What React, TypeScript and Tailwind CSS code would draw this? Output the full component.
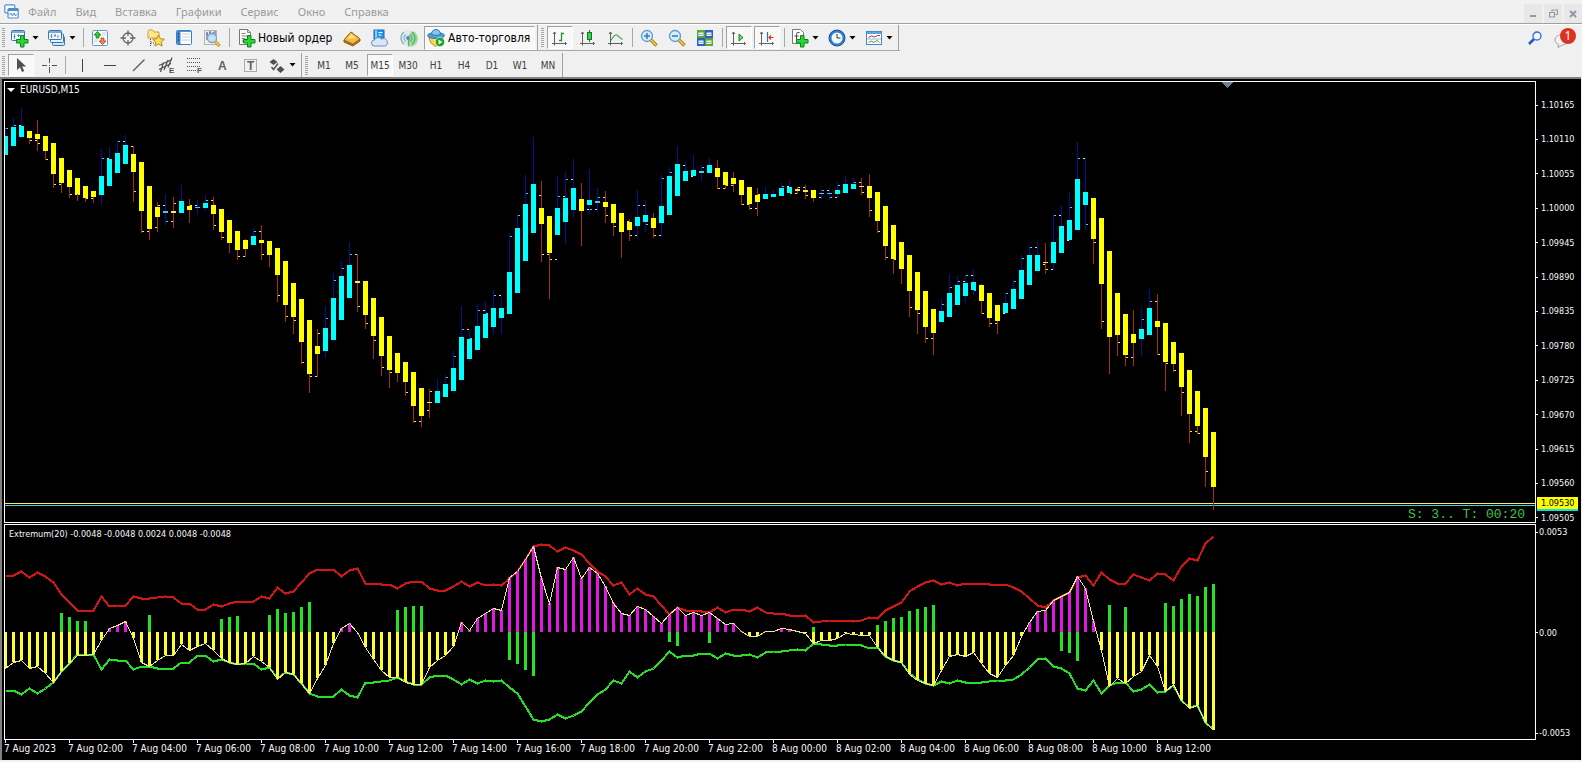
import type { ReactNode } from "react";

/* Bar slots are 8px apart; y values are pixels from the top of the terminal window. */
const STEP = 8;
const FIRST_X = 5;
const ZERO_Y = 632;
const barX = (i: number) => FIRST_X + i * STEP;

/* [direction, high, body top, body bottom, low] */
type Candle = [0 | 1, number, number, number, number];
const CANDLES: Candle[] = [
  [1, 128, 136, 155, 155], [1, 118, 127, 146, 146], [1, 108, 126, 137, 138], [0, 131, 131, 138, 144],
  [0, 120, 134, 139, 151], [0, 136, 136, 151, 160], [0, 143, 143, 174, 188], [0, 158, 158, 183, 193],
  [0, 170, 170, 187, 198], [0, 178, 178, 194, 201], [0, 186, 186, 198, 202], [0, 191, 191, 197, 203],
  [1, 149, 176, 195, 205], [1, 147, 159, 186, 186], [1, 140, 153, 173, 173], [1, 135, 145, 164, 164],
  [0, 146, 154, 172, 202], [0, 162, 162, 211, 233], [0, 186, 186, 229, 240], [0, 202, 207, 217, 232],
  [1, 194, 211, 213, 225], [0, 197, 211, 213, 228], [1, 185, 201, 213, 213], [0, 199, 206, 210, 223],
  [1, 200, 207, 208, 215], [1, 195, 203, 208, 211], [0, 197, 205, 214, 230], [0, 209, 209, 232, 240],
  [0, 220, 220, 243, 253], [0, 231, 231, 250, 260], [0, 239, 240, 249, 257], [1, 228, 236, 245, 245],
  [0, 225, 240, 243, 260], [0, 241, 241, 255, 267], [0, 248, 248, 275, 302], [0, 261, 261, 305, 322],
  [0, 283, 283, 317, 334], [0, 299, 299, 342, 364], [0, 320, 320, 374, 393], [0, 329, 346, 354, 377],
  [1, 306, 328, 351, 358], [1, 273, 298, 340, 340], [1, 261, 276, 320, 320], [1, 242, 265, 298, 298],
  [0, 254, 281, 283, 312], [0, 281, 281, 315, 329], [0, 298, 298, 336, 359], [0, 317, 317, 356, 376],
  [0, 336, 336, 370, 388], [0, 353, 353, 373, 382], [0, 362, 362, 382, 396], [0, 372, 372, 406, 423],
  [0, 388, 388, 416, 427], [0, 389, 402, 403, 418], [1, 379, 391, 403, 403], [1, 375, 384, 397, 397],
  [1, 351, 368, 391, 391], [1, 306, 337, 380, 380], [1, 330, 339, 359, 361], [1, 304, 326, 350, 350],
  [1, 301, 314, 338, 338], [1, 290, 308, 327, 334], [1, 297, 308, 318, 334], [1, 233, 272, 314, 314],
  [1, 214, 228, 293, 293], [1, 175, 204, 261, 261], [1, 137, 184, 233, 233], [0, 181, 208, 224, 262],
  [0, 216, 216, 253, 299], [1, 176, 208, 235, 235], [1, 172, 198, 222, 244], [1, 159, 188, 210, 218],
  [0, 183, 199, 211, 246], [1, 169, 200, 205, 214], [1, 188, 201, 203, 212], [0, 191, 202, 207, 223],
  [0, 204, 204, 223, 236], [0, 213, 213, 232, 258], [0, 219, 222, 230, 241], [1, 190, 217, 226, 238],
  [1, 200, 215, 222, 232], [0, 213, 218, 228, 238], [1, 175, 206, 223, 236], [1, 167, 176, 215, 215],
  [1, 146, 164, 196, 196], [1, 162, 171, 181, 181], [1, 155, 170, 176, 176], [1, 165, 171, 173, 181],
  [1, 158, 165, 173, 173], [0, 160, 168, 177, 189], [0, 172, 172, 185, 189], [0, 172, 178, 184, 192],
  [0, 180, 180, 195, 205], [0, 187, 187, 204, 210], [0, 188, 195, 202, 216], [1, 187, 194, 199, 199],
  [1, 190, 194, 197, 197], [1, 183, 188, 196, 196], [1, 180, 187, 193, 193], [0, 187, 189, 191, 194],
  [0, 185, 190, 192, 199], [0, 190, 190, 198, 202], [1, 189, 193, 194, 199], [1, 188, 193, 194, 200],
  [1, 182, 190, 194, 198], [1, 176, 184, 193, 193], [1, 178, 184, 189, 189], [0, 178, 186, 187, 195],
  [0, 174, 186, 198, 217], [0, 192, 192, 221, 233], [0, 206, 206, 246, 260], [0, 225, 225, 259, 274],
  [0, 242, 242, 269, 284], [0, 255, 255, 291, 317], [0, 272, 272, 310, 334], [0, 291, 291, 327, 343],
  [0, 309, 309, 333, 355], [1, 299, 311, 322, 322], [1, 274, 293, 317, 317], [1, 276, 285, 305, 305],
  [1, 275, 283, 296, 303], [1, 269, 282, 290, 295], [0, 284, 285, 301, 314], [0, 293, 293, 318, 327],
  [0, 305, 305, 321, 334], [1, 293, 303, 313, 314], [1, 280, 289, 309, 309], [1, 255, 270, 299, 299],
  [1, 246, 255, 285, 285], [1, 241, 255, 271, 271], [0, 243, 262, 263, 274], [1, 215, 242, 263, 270],
  [1, 205, 226, 253, 253], [1, 192, 220, 240, 242], [1, 142, 179, 230, 230], [1, 158, 192, 205, 230],
  [0, 198, 198, 239, 264], [0, 218, 218, 284, 329], [0, 251, 251, 337, 374], [0, 293, 293, 335, 356],
  [0, 314, 314, 355, 366], [0, 310, 334, 343, 366], [1, 308, 329, 339, 356], [1, 289, 308, 335, 335],
  [0, 294, 321, 327, 355], [0, 323, 323, 362, 391], [0, 342, 342, 364, 372], [0, 353, 353, 387, 416],
  [0, 370, 370, 414, 443], [0, 391, 391, 426, 434], [0, 408, 408, 457, 487], [0, 432, 432, 487, 510],
];

/* Close of each bar; 0 where the body hides it. */
const CLOSES = [
  128, 125, 0, 140, 143, 159, 184, 0, 194, 194, 198, 0, 158, 0, 141, 146, 191, 231, 227, 205, 221, 203, 0, 205, 0,
  200, 225, 237, 0, 256, 0, 231, 254, 0, 295, 316, 320, 362, 376, 333, 318, 280, 268, 254, 306, 323, 340, 367, 372,
  0, 392, 421, 410, 391, 0, 377, 356, 329, 338, 310, 313, 295, 0, 236, 215, 193, 195, 254, 259, 196, 179, 0, 209,
  209, 197, 215, 226, 221, 235, 205, 224, 235, 178, 172, 165, 176, 0, 167, 0, 188, 185, 0, 204, 208, 194, 0, 0, 186,
  193, 187, 195, 197, 190, 197, 185, 0, 182, 192, 210, 231, 257, 259, 0, 307, 313, 338, 0, 304, 287, 281, 275, 290,
  313, 323, 313, 293, 281, 258, 247, 264, 269, 215, 240, 207, 158, 224, 242, 321, 0, 342, 357, 0, 319, 301, 354,
  363, 370, 392, 431, 433, 471, 0,
];

const SIGNAL = [
  668, 662, 660, 668, 666, 673, 682, 671, 663, 655, 655, 654, 640, 628, 625, 621, 638, 662, 666, 660, 655, 655, 644,
  650, 646, 643, 650, 658, 662, 664, 663, 656, 661, 667, 679, 672, 674, 683, 693, 678, 665, 643, 628, 623, 632, 647,
  659, 670, 677, 677, 682, 684, 684, 667, 660, 655, 646, 622, 630, 618, 613, 608, 610, 577, 571, 559, 546, 578, 603,
  567, 569, 557, 578, 567, 573, 586, 603, 613, 615, 606, 609, 616, 623, 614, 607, 615, 612, 615, 612, 618, 624, 623,
  631, 636, 636, 631, 631, 628, 629, 631, 633, 643, 640, 640, 638, 633, 634, 635, 635, 647, 656, 660, 662, 674, 680,
  683, 685, 670, 656, 654, 656, 652, 663, 673, 677, 665, 655, 636, 622, 611, 610, 600, 596, 592, 576, 588, 621, 650,
  686, 678, 683, 676, 671, 655, 666, 691, 684, 700, 708, 705, 722, 730,
];

const UPPER = [
  575, 575, 571, 577, 572, 576, 582, 594, 602, 610, 610, 610, 596, 606, 605, 605, 596, 598, 598, 597, 596, 597, 603,
  603, 609, 609, 604, 606, 603, 601, 601, 601, 596, 598, 587, 593, 591, 582, 573, 569, 569, 569, 576, 570, 568, 583,
  583, 584, 584, 588, 583, 581, 581, 588, 590, 590, 586, 581, 586, 582, 585, 584, 585, 578, 571, 559, 546, 544, 545,
  551, 547, 550, 554, 563, 571, 576, 585, 582, 594, 588, 594, 596, 605, 614, 607, 610, 610, 611, 612, 607, 612, 609,
  609, 611, 607, 612, 613, 613, 615, 616, 615, 622, 621, 620, 620, 620, 621, 620, 617, 618, 610, 606, 602, 591, 586,
  582, 580, 584, 582, 585, 583, 583, 583, 584, 584, 584, 587, 591, 598, 605, 607, 600, 596, 592, 577, 575, 585, 572,
  579, 583, 583, 574, 577, 580, 573, 574, 580, 566, 558, 560, 543, 536,
];

const LOWER = [
  690, 690, 694, 688, 693, 688, 682, 671, 663, 654, 654, 654, 669, 659, 660, 660, 669, 666, 666, 668, 668, 668, 662,
  662, 655, 655, 661, 659, 662, 664, 663, 663, 669, 667, 678, 672, 674, 683, 693, 696, 696, 696, 689, 695, 697, 682,
  682, 681, 680, 677, 681, 684, 684, 677, 675, 675, 679, 684, 679, 683, 680, 681, 680, 687, 693, 706, 719, 721, 719,
  714, 718, 715, 711, 702, 694, 689, 680, 683, 671, 677, 671, 668, 660, 651, 657, 655, 655, 653, 653, 658, 653, 655,
  655, 654, 657, 652, 651, 651, 650, 649, 650, 643, 644, 645, 645, 644, 644, 645, 648, 647, 656, 660, 662, 673, 679,
  683, 685, 681, 683, 680, 682, 682, 682, 681, 680, 680, 679, 674, 667, 659, 658, 666, 668, 673, 688, 690, 680, 693,
  685, 682, 682, 691, 689, 684, 692, 691, 685, 700, 707, 705, 722, 729,
];

const COUNTER: [number, number][] = [
  [7, 613], [8, 617], [9, 621], [10, 621], [18, 615], [27, 619], [28, 617], [29, 616], [33, 615], [34, 609],
  [35, 613], [36, 612], [37, 607], [38, 602], [49, 610], [50, 607], [51, 606], [52, 606], [63, 660], [64, 664],
  [65, 670], [66, 676], [83, 642], [84, 646], [88, 643], [101, 627], [109, 625], [110, 621], [111, 618], [112, 617],
  [113, 611], [114, 609], [115, 607], [116, 605], [132, 651], [133, 653], [134, 661], [138, 605], [140, 607],
  [145, 603], [146, 606], [147, 599], [148, 594], [149, 596], [150, 587], [151, 584],
];

const PRICES = [
  "1.10165", "1.10110", "1.10055", "1.10000", "1.09945", "1.09890", "1.09835", "1.09780", "1.09725", "1.09670",
  "1.09615", "1.09560", "1.09505",
];
const TIMES = [
  "7 Aug 2023", "7 Aug 02:00", "7 Aug 04:00", "7 Aug 06:00", "7 Aug 08:00", "7 Aug 10:00", "7 Aug 12:00",
  "7 Aug 14:00", "7 Aug 16:00", "7 Aug 18:00", "7 Aug 20:00", "7 Aug 22:00", "8 Aug 00:00", "8 Aug 02:00",
  "8 Aug 04:00", "8 Aug 06:00", "8 Aug 08:00", "8 Aug 10:00", "8 Aug 12:00",
];
const MENU = ["Файл", "Вид", "Вставка", "Графики", "Сервис", "Окно", "Справка"];
const FRAMES = ["M1", "M5", "M15", "M30", "H1", "H4", "D1", "W1", "MN"];

const points = (ys: number[]) => ys.map((y, i) => `${barX(i) + 0.5},${y + 0.5}`).join(" ");

function PricePlot() {
  return (
    <svg className="block h-[440px] w-full" shapeRendering="crispEdges" role="img" aria-label="EURUSD M15">
      <g transform="translate(-5 -82)">
        {CANDLES.map(([up, hi, top, bottom, lo], i) => {
          const x = barX(i);
          const prev = i > 0 ? CLOSES[i - 1] : 0;
          return (
            <g key={i}>
              <rect x={x} y={hi} width={1} height={lo - hi} fill={up ? "#0c0c96" : "#a52a1e"} />
              {prev > 0 && <rect x={x - 2} y={prev} width={2} height={1} fill={up ? "#c8f0d0" : "#f0e08c"} />}
              {CLOSES[i] > 0 && (
                <rect x={x + 1} y={CLOSES[i]} width={2} height={1} fill={up ? "#50d8d8" : "#ffe650"} />
              )}
              <rect
                x={x - 2}
                y={top}
                width={5}
                height={bottom - top}
                fill={up ? (bottom - top < 3 ? "#46c8fa" : "#00ffff") : bottom - top < 3 ? "#ffe650" : "#ffff00"}
              />
            </g>
          );
        })}
        <rect x={5} y={503} width="100%" height={1} fill="#f0f05a" />
        <rect x={5} y={505} width="100%" height={1} fill="#48d1cc" />
        <rect x={1213} y={487} width={1} height={23} fill="#a52a1e" />
        <path d="M1222 82h11l-5.500 6z" fill="#708090" />
      </g>
    </svg>
  );
}

function ExtremumPlot() {
  return (
    <svg className="block h-[214px] w-full" shapeRendering="crispEdges" role="img" aria-label="Extremum">
      <g transform="translate(-5 -525)">
        <polyline points={points(LOWER)} fill="none" stroke="#26e026" strokeWidth={2} />
        <polyline points={points(UPPER)} fill="none" stroke="#d41616" strokeWidth={2} />
        {COUNTER.map(([i, y]) => (
          <rect
            key={i}
            x={barX(i) - 1}
            y={Math.min(y, ZERO_Y)}
            width={3}
            height={Math.abs(y - ZERO_Y)}
            fill="#22e422"
          />
        ))}
        {SIGNAL.map((y, i) => (
          <rect
            key={i}
            x={barX(i) - 1}
            y={Math.min(y, ZERO_Y)}
            width={3}
            height={Math.abs(y - ZERO_Y)}
            fill={y < ZERO_Y ? "#e018e0" : "#ffff28"}
          />
        ))}
        <polyline points={points(SIGNAL)} fill="none" stroke="#f0e68c" strokeWidth={1} />
      </g>
    </svg>
  );
}

/* ---------- icons ---------- */

function Icon({ children, size = 18 }: { children: ReactNode; size?: number }) {
  return (
    <svg width={size} height={size} viewBox="0 0 18 18" fill="none" className="shrink-0 overflow-visible" aria-hidden="true">
      {children}
    </svg>
  );
}

const Plus = () => (
  <path d="M9.500 6.500h3.500v4h4v3.500h-4v4h-3.500v-4h-4v-3.500h4z" fill="#2ad63c" stroke="#0a8418" strokeWidth="1" />
);

const NewChart = () => (
  <Icon>
    <rect x=".5" y="1.500" width="13" height="10" rx="1" fill="#f2f8fe" stroke="#3c74aa" />
    <path d="M1 3h12" stroke="#78abd8" strokeWidth="2" />
    <path d="M3.500 5v5M7.500 5v3M2.500 7.500h2M6 6.500h3M10 7h2" stroke="#5f8fb8" />
    <Plus />
  </Icon>
);
const Profiles = () => (
  <Icon>
    <rect x="4.500" y="7.500" width="12" height="9" rx="1" fill="#d3e6f7" stroke="#3c74aa" />
    <rect x="2.500" y="5" width="13" height="8.500" rx="1" fill="#e3f0fb" stroke="#3c74aa" />
    <rect x=".5" y="1.500" width="13" height="9" rx="1" fill="#f2f8fe" stroke="#3c74aa" />
    <path d="M1 3h12" stroke="#78abd8" strokeWidth="2" />
    <path d="M3.500 5v4M7 5v3M10 6v3M2.500 7h2M6 6.500h2" stroke="#5f8fb8" />
  </Icon>
);
const MarketWatch = () => (
  <Icon>
    <rect x="1.500" y="1.500" width="15" height="15" rx="1" fill="#fff" stroke="#5a9bd2" />
    <path d="M3 11h4M3 13h4M11 4h4M11 6h4" stroke="#c4d2dc" />
    <path d="M6.500 2.500l3.500 3.500h-2v3h-3v-3h-2z" fill="#3cc83c" stroke="#0f7a18" strokeWidth=".8" />
    <path d="M11.500 15.500l-3.500-3.500h2v-3h3v3h2z" fill="#f88050" stroke="#c03c14" strokeWidth=".8" />
  </Icon>
);
const Target = () => (
  <Icon>
    <circle cx="9" cy="9" r="5" stroke="#666" strokeWidth="1.300" />
    <path d="M9 1.500v5.500M9 11v5.500M1.500 9h5.500M11 9h5.500" stroke="#666" strokeWidth="1.300" />
  </Icon>
);
const starPath = "M11.500 6l1.800 3.700 4 .5-3 2.800.8 4-3.600-2-3.600 2 .8-4-3-2.800 4-.5z";
const Navigator = () => (
  <Icon>
    <path d="M1 2.500q0-1.500 1.500-1.500h3l1.500 2h5v6h-11z" fill="#ffe690" stroke="#c8a43c" />
    <path d="M3.500 10v7M4 14h3" stroke="#444" strokeDasharray="1 1" />
    <path d={starPath} fill="#ffdc50" stroke="#b08818" />
  </Icon>
);
const DataWindow = () => (
  <Icon>
    <rect x="1.500" y="1.500" width="15" height="14" rx="1" fill="#fff" stroke="#3c7cc0" />
    <path d="M2 2.500h14" stroke="#4a9be0" />
    <rect x="2" y="2" width="3.500" height="13" fill="#3f8ad4" />
    <path d="M3 5h1M3 8h1M3 11h1" stroke="#111" />
    <path d="M7 5h8M7 8h8M7 11h8" stroke="#c4ccd8" />
  </Icon>
);
const Tester = () => (
  <Icon>
    <rect x="1.500" y="1.500" width="12" height="14" fill="#f4efe2" stroke="#b4b4b4" />
    <path d="M4 3v8M7 2v5M10 3v5M12 2v4M3 5h2M6 4h2M9 5h2" stroke="#4d6c96" strokeWidth="1.200" />
    <circle cx="9" cy="9" r="4.500" fill="#bfe0f7" fillOpacity=".85" stroke="#78a4cc" strokeWidth="1.300" />
    <path d="M12.500 12.500l4 4.500" stroke="#b8860b" strokeWidth="3" />
    <path d="M12.500 12.500l3.500 4" stroke="#ffd75a" strokeWidth="1.300" />
  </Icon>
);
const NewOrder = () => (
  <Icon>
    <path d="M1.500.5h8l3 3v12h-11z" fill="#fff" stroke="#777" />
    <path d="M9.500.5v3h3M3.500 4.500h4M3.500 7h6M3.500 9.500h4M3.500 12h2" stroke="#888" />
    <Plus />
  </Icon>
);
const Editor = () => (
  <Icon>
    <path d="M1 11l7-8 9 7v2l-7 5-9-4z" fill="#b87414" stroke="#8c5a0c" />
    <path d="M1 11l7-8 9 7-7 5z" fill="#f0bc48" stroke="#a86c10" />
    <path d="M4 10l4-5 5 4z" fill="#ffe28c" />
  </Icon>
);
const Market = () => (
  <Icon>
    <rect x="3" y="1" width="10" height="9" fill="#1e96f0" stroke="#0f6cc0" />
    <path d="M5 1v9M7.500 3.500h4M7.500 6h3" stroke="#fff" />
    <path d="M3.500 17a3 3 0 0 1 0-6 4 3.500 0 0 1 7-1 3.500 3.500 0 0 1 4 7z" fill="#dce7f5" stroke="#6f8fbf" />
  </Icon>
);
const Signals = () => (
  <Icon>
    <circle cx="9" cy="9" r="8" fill="#e2e9ee" />
    <path d="M9 17.500a8 8 0 0 0 4-15.500l-4 5z" fill="#a4d8a4" />
    <path d="M5 15a7.500 7.500 0 0 1 0-12M7 12.500a4 4 0 0 1 0-7" stroke="#8ab0cc" strokeWidth="1.300" />
    <path d="M13 15a7.500 7.500 0 0 0 0-12M11 12.500a4 4 0 0 0 0-7M9.500 9v8" stroke="#58b068" strokeWidth="1.300" />
    <circle cx="9" cy="9" r="2" fill="#4a90b8" />
  </Icon>
);
const AutoTrade = () => (
  <Icon>
    <path d="M2 8q7 3 14 0l-1.500 6-6 3.500-5-4z" fill="#ffd84a" stroke="#b48c14" />
    <ellipse cx="9" cy="6.500" rx="8.500" ry="3" fill="#4b9fdc" stroke="#2a78b4" />
    <path d="M4.500 5.500q.5-5 4.500-5t4.500 5q-4.500 2-9 0z" fill="#86c6f0" stroke="#2a78b4" />
    <circle cx="13" cy="13" r="4.700" fill="#18a428" stroke="#fff" strokeWidth=".6" />
    <path d="M11.500 10.500v5l4-2.500z" fill="#fff" />
  </Icon>
);
const Axes = () => (
  <path d="M3.500 3v13.500M1 14.500h14.500M2 5l1.500-2 1.500 2M14 13l1.500 1.500-1.500 1.500" stroke="#606060" />
);
const BarChart = () => (
  <Icon>
    <Axes />
    <path d="M10.500 3.500v9M10.500 4.500h2.500M8 11.500h2.500" stroke="#1e9632" strokeWidth="1.300" />
  </Icon>
);
const CandleChart = () => (
  <Icon>
    <Axes />
    <path d="M10.500 1v12" stroke="#0f7a1e" />
    <rect x="8.500" y="3.500" width="4" height="7" fill="#32d24a" stroke="#0f7a1e" />
  </Icon>
);
const LineChart = () => (
  <Icon>
    <Axes />
    <path d="M4 11.500q4-7.500 6.500-5t5 4" stroke="#58a860" strokeWidth="1.200" />
  </Icon>
);
const Magnifier = ({ plus }: { plus?: boolean }) => (
  <Icon>
    <path d="M11 11l5.500 5.500" stroke="#a87c10" strokeWidth="3.400" />
    <path d="M11 11l5 5" stroke="#f8d048" strokeWidth="1.600" />
    <circle cx="7" cy="7" r="5.500" fill="#d4edfc" stroke="#5a9ad4" strokeWidth="1.300" />
    <path d={plus ? "M4 7h6M7 4v6" : "M4 7h6"} stroke="#3c7cc0" strokeWidth="1.600" />
  </Icon>
);
const Tile = () => (
  <Icon>
    <rect x="1" y="1" width="8" height="8" fill="#5aa82c" />
    <rect x="9" y="1" width="8" height="8" fill="#2b62c4" />
    <rect x="1" y="9" width="8" height="8" fill="#2b62c4" />
    <rect x="9" y="9" width="8" height="8" fill="#5aa82c" />
    <path d="M2.500 3.500h5v3.500h-5zM10.500 3.500h5v3.500h-5zM2.500 11.500h5v3.500h-5zM10.500 11.500h5v3.500h-5z" fill="#eef6fb" />
    <path d="M3 5.500h4M11 5.500h4M3 13.500h4M11 13.500h4" stroke="#9ab8cc" />
  </Icon>
);
const AutoScroll = () => (
  <Icon>
    <Axes />
    <path d="M9 5v7l4-3.500z" fill="#6cd878" stroke="#148a24" />
  </Icon>
);
const ChartShift = () => (
  <Icon>
    <Axes />
    <path d="M9.500 3v10" stroke="#3470b0" strokeWidth="1.200" />
    <path d="M11 8.500h4.500M13 6.500l-2 2 2 2" stroke="#c84014" strokeWidth="1.200" />
  </Icon>
);
const Indicators = () => (
  <Icon>
    <path d="M1.500.5h8l3 3v11h-11z" fill="#fff" stroke="#777" />
    <path d="M8.500 3.500q-3-1-3 2v6M3.500 7h4" stroke="#444" />
    <Plus />
  </Icon>
);
const Clock = () => (
  <Icon>
    <circle cx="9" cy="9" r="8" fill="#2f7fd4" stroke="#1a4f94" />
    <circle cx="9" cy="9" r="5.500" fill="#f2f8fd" />
    <path d="M9 5v4h3.500" stroke="#333" />
  </Icon>
);
const Template = () => (
  <Icon>
    <rect x="1.500" y="2.500" width="15" height="13" fill="#fff" stroke="#4a86c0" />
    <path d="M2 4h14" stroke="#5aa4e4" strokeWidth="2" />
    <path d="M3.500 8.500l3-1.500 3 1 3-1.500h2.500" stroke="#904038" />
    <path d="M2 10h14" stroke="#9ab4cc" />
    <path d="M3.500 13.500l2.500-1.500 3 1.500 3-2 2.500 2" stroke="#4aa060" />
  </Icon>
);

const Cursor = () => (
  <Icon>
    <path d="M5 2v12l3-2.800 2 4.800 2.200-1-2-4.500h4z" fill="#505050" />
  </Icon>
);
const Cross = () => (
  <Icon>
    <path d="M9.500 2v5M9.500 11v6M2 9.500h5M12 9.500h5M9 9.500h1" stroke="#555" />
  </Icon>
);
const VLine = () => (
  <Icon>
    <path d="M9.500 3v13" stroke="#444" />
  </Icon>
);
const HLine = () => (
  <Icon>
    <path d="M3 9.500h12" stroke="#444" />
  </Icon>
);
const Trend = () => (
  <Icon>
    <path d="M4 15l11.500-11.500" stroke="#505050" strokeWidth="1.100" />
  </Icon>
);
const Channel = () => (
  <Icon>
    <path d="M2 9.500l13-6M2 13.500l12-6M3.500 16l3-9.500M7 14l4-10M11 11.500l4-10" stroke="#505050" strokeWidth="1.200" />
    <text x="12" y="17" fontSize="8" fontWeight="700" fill="#505050" fontFamily="Liberation Sans, sans-serif">E</text>
  </Icon>
);
const Fibo = () => (
  <Icon>
    <path d="M2 2.500h14M2 6.500h14M2 10.500h14M2 14.500h9" stroke="#505050" strokeDasharray="1 1" />
    <text x="12" y="17" fontSize="8" fontWeight="700" fill="#505050" fontFamily="Liberation Sans, sans-serif">F</text>
  </Icon>
);
const TextTool = () => (
  <Icon>
    <text x="5" y="14" fontSize="12" fontWeight="700" fill="#606060" fontFamily="Liberation Sans, sans-serif">A</text>
  </Icon>
);
const LabelTool = () => (
  <Icon>
    <rect x="3.500" y="3.500" width="12" height="12" stroke="#666" strokeDasharray="1 1" />
    <text x="6" y="14" fontSize="12" fontWeight="700" fill="#606060" fontFamily="Liberation Sans, sans-serif">T</text>
  </Icon>
);
const Arrows = () => (
  <Icon>
    <path d="M5.500 3l4 3-4 3-4-3zM12.500 10l4 3.500-4 3.500-4-3.500z" fill="#505050" />
    <path d="M3.500 11l2 2.500 4.500-6" stroke="#505050" strokeWidth="1.400" />
  </Icon>
);

/* ---------- toolbar parts ---------- */

const Grip = () => (
  <span className="flex w-[7px] shrink-0 flex-col items-center justify-center gap-px" aria-hidden="true">
    {Array.from({ length: 10 }, (_, i) => (
      <span key={i} className="h-px w-[3px] bg-[#a6a6a6]" />
    ))}
  </span>
);
const Sep = () => (
  <span className="flex w-[6px] shrink-0 justify-center py-[3px]" aria-hidden="true">
    <span className="w-px bg-[#a8a8a8]" />
  </span>
);
const ThinSep = () => (
  <span className="flex w-[5px] shrink-0 justify-center py-[3px]" aria-hidden="true">
    <span className="w-px bg-[#a8a8a8]" />
  </span>
);
const End = () => <span className="mr-px w-px shrink-0 bg-[#a0a0a0]" aria-hidden="true" />;

function Tool({ label, on, children }: { label: string; on?: boolean; children: ReactNode }) {
  return (
    <button type="button" aria-label={label} aria-pressed={on} className="flex w-7 shrink-0 items-stretch p-px">
      <span
        className={
          on
            ? "flex flex-1 items-center justify-center border border-t-[#a0a0a0] border-r-white border-b-white border-l-[#a0a0a0] bg-[#f8f8f8]"
            : "flex flex-1 items-center justify-center"
        }
      >
        {children}
      </span>
    </button>
  );
}
function Drop({ label, children }: { label: string; children: ReactNode }) {
  return (
    <button type="button" aria-label={label} className="flex w-[37px] shrink-0 items-center gap-[3px] pl-1">
      {children}
      <svg width="7" height="4" viewBox="0 0 7 4" className="shrink-0" aria-hidden="true">
        <path d="M.5 0h6l-3 3.500z" fill="#000" />
      </svg>
    </button>
  );
}

export default function App() {
  return (
    <div className="flex min-h-screen flex-col bg-[#f0f0f0] font-['Noto_Sans','Open_Sans',sans-serif]">
      <header>
        <div className="flex h-6 items-stretch border-b border-[#a0a0a0] bg-[#f1f1f1]">
          <span className="flex w-[19px] items-center justify-end">
            <svg width="15" height="15" viewBox="0 0 15 15" fill="none" aria-hidden="true">
              <rect x=".8" y=".8" width="10" height="8" rx="1" fill="#fff" stroke="#4a90d0" strokeWidth="1.200" />
              <rect x="4" y="4.500" width="10.200" height="9.500" rx="1" fill="#fff" stroke="#4a90d0" strokeWidth="1.200" />
              <path d="M4 6h10" stroke="#4a90d0" strokeWidth="2" />
              <path d="M5.500 11l1.500-2 1.500 3 1.500-3 1.500 3 1-2" stroke="#4a90d0" />
            </svg>
          </span>
          <nav className="flex flex-1 items-center gap-[19px] pt-0.5 pl-[9px] text-[11px] text-[#9a9a9a]">
            {MENU.map((m) => (
              <a key={m} href="#">
                {m}
              </a>
            ))}
          </nav>
          <div className="flex items-stretch gap-0.5 pt-1">
            <button type="button" aria-label="Свернуть" className="flex w-[18px] items-center justify-center bg-[#e8e8e8]">
              <span className="mt-[5px] h-0.5 w-1.5 bg-[#8c9aa6]" />
            </button>
            <button type="button" aria-label="Восстановить" className="flex w-[18px] items-center justify-center bg-[#e8e8e8]">
              <svg width="9" height="9" viewBox="0 0 9 9" fill="none" aria-hidden="true">
                <path d="M3 2.500v-1.500h5.500v4.500h-2M.5 3.500h5v4.500h-5z" stroke="#8c9aa6" strokeWidth="1.200" />
              </svg>
            </button>
            <button type="button" aria-label="Закрыть" className="flex w-[18px] items-center justify-center bg-[#e8e8e8]">
              <svg width="8" height="8" viewBox="0 0 8 8" aria-hidden="true">
                <path d="M1 1l6 6M7 1l-6 6" stroke="#8c9aa6" strokeWidth="2" />
              </svg>
            </button>
          </div>
        </div>

        <div className="flex items-start justify-between border-t border-white">
          <div>
            <div className="flex h-[26px] items-stretch border-b border-[#a8a8a8]">
              <Grip />
              <Drop label="Новый график"><NewChart /></Drop>
              <Drop label="Профили"><Profiles /></Drop>
              <ThinSep />
              <Tool label="Обзор рынка"><MarketWatch /></Tool>
              <Tool label="Окно данных"><Target /></Tool>
              <Tool label="Навигатор"><Navigator /></Tool>
              <Tool label="Терминал"><DataWindow /></Tool>
              <Tool label="Тестер стратегий"><Tester /></Tool>
              <Sep />
              <button type="button" className="flex w-[106px] shrink-0 items-center gap-0.5 pl-1.5 font-['DejaVu_Sans_Condensed','DejaVu_Sans',sans-serif] text-xs whitespace-nowrap text-black">
                <NewOrder />
                Новый ордер
              </button>
              <Tool label="Редактор"><Editor /></Tool>
              <Tool label="Маркет"><Market /></Tool>
              <Tool label="Сигналы"><Signals /></Tool>
              <button type="button" aria-pressed="true" className="mx-0.5 mt-px flex w-[111px] shrink-0 items-center gap-[3px] border border-t-[#a0a0a0] border-r-white border-b-white border-l-[#a0a0a0] bg-[#f8f8f8] pl-0.5 font-['DejaVu_Sans_Condensed','DejaVu_Sans',sans-serif] text-xs whitespace-nowrap text-black">
                <AutoTrade />
                Авто-торговля
              </button>
              <End />
              <Grip />
              <Tool label="Бары" on><BarChart /></Tool>
              <Tool label="Свечи"><CandleChart /></Tool>
              <Tool label="Линия"><LineChart /></Tool>
              <ThinSep />
              <Tool label="Увеличить"><Magnifier plus /></Tool>
              <Tool label="Уменьшить"><Magnifier /></Tool>
              <Tool label="Упорядочить окна"><Tile /></Tool>
              <Sep />
              <Tool label="Автопрокрутка" on><AutoScroll /></Tool>
              <Tool label="Сдвиг графика" on><ChartShift /></Tool>
              <Sep />
              <Drop label="Индикаторы"><Indicators /></Drop>
              <Drop label="Периоды"><Clock /></Drop>
              <Drop label="Шаблоны"><Template /></Drop>
              <End />
            </div>
            <div className="flex h-[26px] items-stretch pt-0.5">
              <Grip />
              <Tool label="Курсор" on><Cursor /></Tool>
              <Tool label="Перекрестие"><Cross /></Tool>
              <ThinSep />
              <Tool label="Вертикальная линия"><VLine /></Tool>
              <Tool label="Горизонтальная линия"><HLine /></Tool>
              <Tool label="Трендовая линия"><Trend /></Tool>
              <Tool label="Канал"><Channel /></Tool>
              <Tool label="Фибоначчи"><Fibo /></Tool>
              <Tool label="Текст"><TextTool /></Tool>
              <Tool label="Метка"><LabelTool /></Tool>
              <Drop label="Стрелки"><Arrows /></Drop>
              <End />
              <Grip />
              {FRAMES.map((f) => (
                <Tool key={f} label={f} on={f === "M15"}>
                  <span className="font-['DejaVu_Sans_Condensed','DejaVu_Sans',sans-serif] text-[10px] text-[#404040]">
                    {f}
                  </span>
                </Tool>
              ))}
              <End />
            </div>
          </div>
          <div className="flex items-center gap-3 pt-[3px] pr-1.5">
            <button type="button" aria-label="Поиск">
              <svg width="14" height="14" viewBox="0 0 14 14" fill="none" aria-hidden="true">
                <path d="M1 13l5-5" stroke="#2458c8" strokeWidth="2.600" />
                <circle cx="9" cy="5" r="4" fill="#f4f8ff" stroke="#2f66d8" strokeWidth="1.300" />
              </svg>
            </button>
            <button type="button" aria-label="Уведомления" className="relative block h-5 w-[22px]">
              <svg width="16" height="14" viewBox="0 0 16 14" className="mt-1.5" aria-hidden="true">
                <path d="M7 1c4 0 7 2 7 5s-3 5-6 5l-4 2.500.5-3c-2-1-3.500-2.500-3.500-4.500 0-3 2.500-5 6-5z" fill="#f2f2f2" stroke="#a0a0a0" />
              </svg>
              <span className="absolute top-0 right-0 flex size-4 items-center justify-center rounded-full bg-[#dc3220] text-xs leading-none text-white">
                1
              </span>
            </button>
          </div>
        </div>
      </header>

      <main className="mr-px mb-0.5 flex flex-1 border-t-2 border-l-2 border-[#808080] bg-black pt-0.5 pl-0.5 font-['DejaVu_Sans_Condensed','DejaVu_Sans',sans-serif] text-[9px] leading-[14px] text-[#f8f8f8]">
        <div className="flex min-w-0 flex-1 flex-col">
          <section className="relative border border-white">
            <PricePlot />
            <h1 className="absolute top-px left-0.5 flex items-center gap-[5px] text-[10px]">
              <svg width="8" height="4" viewBox="0 0 8 4" aria-hidden="true">
                <path d="M0 0h8l-4 4z" fill="#fff" />
              </svg>
              EURUSD,M15
            </h1>
            <p className="absolute right-2.5 bottom-0 font-['Liberation_Mono',monospace] text-[13px] whitespace-pre text-[#3cc83c]">
              S: 3.. T: 00:20
            </p>
          </section>
          <section className="relative mt-px border border-white">
            <ExtremumPlot />
            <h2 className="absolute top-0.5 left-1">Extremum(20) -0.0048 -0.0048 0.0024 0.0048 -0.0048</h2>
          </section>
          <ol className="flex overflow-hidden text-[10px] leading-3">
            {TIMES.map((t) => (
              <li key={t} className="w-16 shrink-0 whitespace-nowrap">
                <span className="ml-px block h-[3px] w-px bg-white" />
                {t}
              </li>
            ))}
          </ol>
        </div>

        <div className="relative flex w-[45px] shrink-0 flex-col pt-[17px]">
          <ul className="flex h-[427px] flex-col justify-between">
            {PRICES.map((p) => (
              <li key={p} className="flex items-center gap-[3px]">
                <span className="h-px w-0.5 bg-white" />
                {p}
              </li>
            ))}
          </ul>
          <ul className="flex h-[215px] flex-col justify-between">
            {["0.0053", "0.00", "-0.0053"].map((v) => (
              <li key={v} className="flex items-center gap-px">
                <span className="h-px w-0.5 bg-white" />
                {v}
              </li>
            ))}
          </ul>
          <div className="absolute top-[416px] left-px w-[41px] border-b-2 border-[#00e5e5] bg-[#ffff00] pl-1 leading-3 text-black">
            1.09530
          </div>
        </div>
      </main>
    </div>
  );
}
